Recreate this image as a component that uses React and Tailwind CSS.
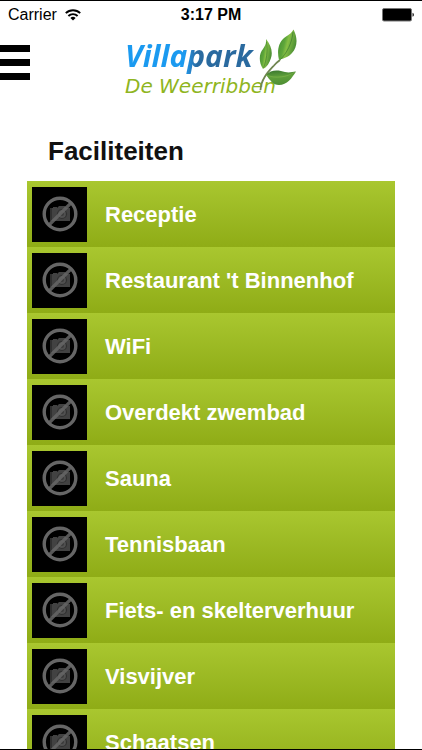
import React from "react";

const facilities = [
  "Receptie",
  "Restaurant 't Binnenhof",
  "WiFi",
  "Overdekt zwembad",
  "Sauna",
  "Tennisbaan",
  "Fiets- en skelterverhuur",
  "Visvijver",
  "Schaatsen",
];

// --- Status bar icons ---
function WifiIcon() {
  return (
    <svg width="16" height="12" viewBox="0 0 16 12" aria-hidden="true">
      <g fill="none" stroke="#000" strokeWidth="1.9">
        <path d="M0.8 4.2a10.2 10.2 0 0 1 14.4 0" />
        <path d="M3.4 7a6.5 6.5 0 0 1 9.2 0" />
      </g>
      <path d="M8 11.6L5.4 9a3.7 3.7 0 0 1 5.2 0z" />
    </svg>
  );
}

function BatteryIcon() {
  return (
    <svg width="32" height="14" viewBox="0 0 32 14" aria-hidden="true">
      <rect x="0.5" y="0.5" width="29" height="12.5" rx="1.5" fill="#000" stroke="#777" />
      <path d="M30.5 4.8q1.5 0.5 1.5 2t-1.5 2z" fill="#222" />
    </svg>
  );
}

// --- Leaves that grow out of the end of the logo ---
function Leaves() {
  return (
    <svg
      className="absolute right-0 top-0"
      width="38"
      height="64"
      viewBox="0 0 38 64"
      aria-hidden="true"
    >
      <defs>
        <linearGradient id="leaf" x1="0" y1="0" x2="1" y2="0.4">
          <stop offset="0" stopColor="#3f8a35" />
          <stop offset="0.45" stopColor="#5ea63a" />
          <stop offset="0.6" stopColor="#86bf44" />
          <stop offset="1" stopColor="#4c8f35" />
        </linearGradient>
        <linearGradient id="leafLow" x1="0" y1="0" x2="0.2" y2="1">
          <stop offset="0" stopColor="#37742f" />
          <stop offset="0.5" stopColor="#5fa03a" />
          <stop offset="1" stopColor="#4f8f35" />
        </linearGradient>
      </defs>
      <path
        d="M1.5 61C2 50 9 43 15 36.5Q17 34 21 31"
        fill="none"
        stroke="#6f8550"
        strokeWidth="1.8"
      />
      <path d="M7 10C12 16 14 23 12 29C10.5 34 8 38 4 40C-1 32 0.5 24 4 20C6 17 7.5 15 7 10Z" fill="url(#leaf)" />
      <path d="M7.500 13C9 22 7.500 31 4.500 39" fill="none" stroke="#3c7a30" strokeWidth="0.6" />
      <path d="M34.5 0.5C39 9 38.5 18 33 24C30 28 25 29 20 31C18 23 19 14 25 9C29 6 32 5 34.5 0.5Z" fill="url(#leaf)" />
      <path d="M34 3C33 14 28 24 21 31" fill="none" stroke="#3c7a30" strokeWidth="0.7" />
      <path d="M7 46C12 40 20 41 26 43C30 44 33 43 37 42.5C33 49 28 56 20 56C14 56 11 51 7 46Z" fill="url(#leafLow)" />
      <path d="M7 46C17 50 28 48 36 43" fill="none" stroke="#8dba52" strokeWidth="0.5" />
    </svg>
  );
}

function Logo() {
  return (
    <a href="#home" className="relative block h-[74px] w-[172px] italic whitespace-nowrap">
      <span className="block w-fit bg-linear-to-r from-[#1b9af0] from-45% to-[#2a6a9f] to-55% bg-clip-text pt-[7px] pr-1 font-['Open_Sans','Noto_Sans',sans-serif] text-[30px] leading-[40px] font-bold text-transparent">
        Villapark
      </span>
      <span className="-mt-[2px] block font-['DejaVu_Sans',sans-serif] text-[20px] leading-[24px] text-[#8fb521]">
        De Weerribben
      </span>
      <Leaves />
    </a>
  );
}

// --- Placeholder for a facility without a photo ---
function NoPhoto() {
  return (
    <span className="flex size-[55px] shrink-0 items-center justify-center bg-black">
      <svg width="36" height="36" viewBox="0 0 36 36" aria-hidden="true">
        <path d="M8 12h3v-1h4v1l2-2h6l2 2h3v13H8z" fill="#424242" />
        <path d="M8 12h2v13H8z" fill="#303030" />
        <circle cx="20" cy="18" r="4.5" fill="#505050" stroke="#303030" strokeWidth="1.2" />
        <circle cx="20" cy="18" r="2" fill="#3c3c3c" />
        <circle cx="18" cy="18" r="15.8" fill="none" stroke="#666" strokeWidth="3.4" />
        <path d="M7 29L29 7" stroke="#666" strokeWidth="3.2" strokeOpacity="0.85" />
      </svg>
    </span>
  );
}

function App() {
  return (
    <div className="flex h-screen flex-col overflow-hidden border-y border-black bg-white font-['Liberation_Sans',Arial,sans-serif] text-black">
      {/* Status bar */}
      <div className="grid h-7 shrink-0 grid-cols-3 items-center px-2 text-[16px] leading-7">
        <div className="flex items-center gap-2">
          <span>Carrier</span>
          <WifiIcon />
        </div>
        <span className="text-center font-bold">3:17 PM</span>
        <div className="flex justify-end">
          <BatteryIcon />
        </div>
      </div>

      {/* Header */}
      <header className="grid shrink-0 grid-cols-[1fr_auto_1fr] items-start">
        <button
          type="button"
          aria-label="Menu"
          className="mt-4 flex w-[30px] flex-col gap-[7px]"
        >
          <span className="h-[7px] w-full bg-black" />
          <span className="h-[7px] w-full bg-black" />
          <span className="h-[7px] w-full bg-black" />
        </button>
        <Logo />
      </header>

      {/* Facility list */}
      <main className="min-h-0 flex-1 overflow-hidden px-[27px]">
        <h1 className="mt-[32px] mb-[14px] pl-[21px] text-[26px] leading-8 font-bold text-[#111]">
          Faciliteiten
        </h1>
        <ul>
          {facilities.map((name) => (
            <li key={name}>
              <a
                href="#facility"
                className="flex h-[66px] items-center gap-[18px] bg-linear-to-b from-[#a9c72f] to-[#8fac16] px-[5px] text-[22px] font-bold text-white"
              >
                <NoPhoto />
                {name}
              </a>
            </li>
          ))}
        </ul>
      </main>
    </div>
  );
}

export default App;
